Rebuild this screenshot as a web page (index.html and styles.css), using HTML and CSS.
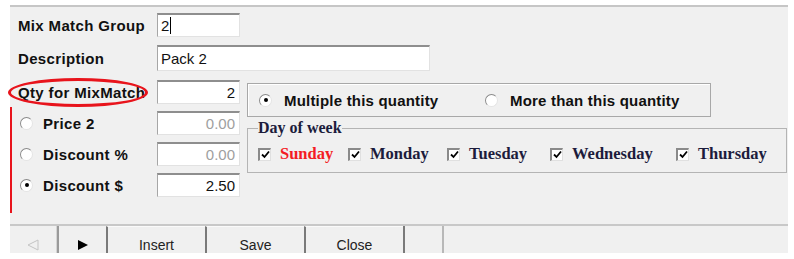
FILE: index.html
```html
<!DOCTYPE html>
<html>
<head>
  <meta charset="utf-8">
  <link rel="stylesheet" href="styles.css">
</head>
<body>
  <div class="window">
    <div class="form">
      <div class="row row-group">
        <span class="label">Mix Match Group</span>
        <div class="field field-short">2<span class="caret"></span></div>
      </div>
      <div class="row row-desc">
        <span class="label">Description</span>
        <div class="field field-long">Pack 2</div>
      </div>

      <div class="lower">
        <div class="left-col">
          <span class="red-line"></span>
          <div class="row row-qty">
            <span class="label">Qty for MixMatch</span>
            <span class="highlight"></span>
            <div class="field field-short num">2</div>
          </div>
          <div class="row">
            <span class="radio"></span>
            <span class="label label-radio">Price 2</span>
            <div class="field field-short num dim">0.00</div>
          </div>
          <div class="row">
            <span class="radio"></span>
            <span class="label label-radio">Discount %</span>
            <div class="field field-short num dim">0.00</div>
          </div>
          <div class="row">
            <span class="radio checked"></span>
            <span class="label label-radio">Discount $</span>
            <div class="field field-short num">2.50</div>
          </div>
        </div>

        <div class="right-col">
          <div class="group qty-mode">
            <div class="opt opt-multiple"><span class="radio checked"></span>Multiple this quantity</div>
            <div class="opt"><span class="radio"></span>More than this quantity</div>
          </div>
          <fieldset class="days">
            <legend>Day of week</legend>
            <div class="day-list">
              <div class="day day-sun"><span class="check"><svg viewBox="0 0 9 9" width="9" height="9"><path d="M1 4.5 L3.5 7 L8 1.5" fill="none" stroke="#000" stroke-width="1.8"/></svg></span><span class="sunday">Sunday</span></div>
              <div class="day day-mon"><span class="check"><svg viewBox="0 0 9 9" width="9" height="9"><path d="M1 4.5 L3.5 7 L8 1.5" fill="none" stroke="#000" stroke-width="1.8"/></svg></span>Monday</div>
              <div class="day day-tue"><span class="check"><svg viewBox="0 0 9 9" width="9" height="9"><path d="M1 4.5 L3.5 7 L8 1.5" fill="none" stroke="#000" stroke-width="1.8"/></svg></span>Tuesday</div>
              <div class="day day-wed"><span class="check"><svg viewBox="0 0 9 9" width="9" height="9"><path d="M1 4.5 L3.5 7 L8 1.5" fill="none" stroke="#000" stroke-width="1.8"/></svg></span>Wednesday</div>
              <div class="day"><span class="check"><svg viewBox="0 0 9 9" width="9" height="9"><path d="M1 4.5 L3.5 7 L8 1.5" fill="none" stroke="#000" stroke-width="1.8"/></svg></span>Thursday</div>
            </div>
          </fieldset>
        </div>
      </div>
    </div>

    <div class="toolbar">
      <div class="btn btn-prev"><svg viewBox="0 0 12 12" width="12" height="12"><polygon points="11,1 1,6 11,11" fill="none" stroke="#c4c4c4" stroke-width="1"/></svg></div>
      <div class="btn btn-next"><svg viewBox="0 0 10 10" width="10" height="10"><polygon points="0,0 10,5 0,10" fill="#000"/></svg></div>
      <div class="btn btn-wide">Insert</div>
      <div class="btn btn-wide">Save</div>
      <div class="btn btn-wide">Close</div>
      <div class="btn btn-blank"></div>
      <div class="btn btn-rest"></div>
    </div>
  </div>
</body>
</html>
```

FILE: styles.css
```css
body {
  margin: 0;
  background-color: #ffffff;
  font-family: 'Liberation Sans', Arial, sans-serif;
  color: #111;
  height: 259px;
  overflow: hidden;
}

.window {
  margin: 5px 0 0 10px;
  width: 778px;
  height: 248px;
  box-sizing: border-box;
  background-color: #f0f0f0;
  border-top: 2px solid #c6c6c6;
  display: flex;
  flex-direction: column;
}

.form {
  flex: 1;
  padding: 6px 0 0 8px;
}

.row {
  display: flex;
  align-items: center;
  height: 24px;
  position: relative;
}

.row-desc {
  margin-top: 8px;
  height: 26px;
}

.label {
  width: 139px;
  flex: none;
  font-size: 15px;
  font-weight: bold;
  letter-spacing: 0.35px;
  white-space: nowrap;
}

.label-radio {
  width: 114px;
}

.field {
  box-sizing: border-box;
  height: 100%;
  background-color: #fff;
  border: 1px solid #e2e2e2;
  border-top: 2px solid #8e8e8e;
  border-left: 1px solid #a6a6a6;
  font-size: 15px;
  padding: 0 3px;
  display: flex;
  align-items: center;
}

.field-short {
  width: 83px;
}

.field-long {
  width: 273px;
}

.num {
  justify-content: flex-end;
  padding-right: 4px;
}

.dim {
  color: #a0a0a0;
}

.caret {
  display: inline-block;
  width: 1px;
  height: 17px;
  background-color: #000;
  margin-left: 1px;
}

.lower {
  display: flex;
  margin: 8px 0 0 -8px;
}

.left-col {
  position: relative;
  width: 237px;
  box-sizing: border-box;
  padding: 1px 7px 0 8px;
  display: flex;
  flex-direction: column;
  gap: 7px;
}

.red-line {
  position: absolute;
  left: 0;
  top: 28px;
  width: 2px;
  height: 106px;
  background-color: #e8141c;
}

.highlight {
  position: absolute;
  left: -10px;
  top: -2px;
  width: 140px;
  height: 29px;
  box-sizing: border-box;
  border: 3px solid #e8141c;
  border-radius: 50%;
}

.radio {
  flex: none;
  width: 13px;
  height: 13px;
  box-sizing: border-box;
  border-radius: 50%;
  background-color: #fff;
  border: 1px solid #e4e4e4;
  border-top-color: #8a8a8a;
  border-left-color: #8a8a8a;
  margin: 0 10px 0 2px;
  display: flex;
  align-items: center;
  justify-content: center;
}

.radio.checked::after {
  content: "";
  width: 4px;
  height: 4px;
  border-radius: 50%;
  background-color: #000;
}

.right-col {
  width: 541px;
}

.group {
  margin-top: 4px;
  width: 464px;
  height: 34px;
  box-sizing: border-box;
  border: 1px solid #a8a8a8;
  box-shadow: inset 1px 1px 0 #fff;
  display: flex;
  align-items: center;
  padding-left: 11px;
}

.opt {
  display: flex;
  align-items: center;
  font-size: 15px;
  font-weight: bold;
  letter-spacing: 0.2px;
}

.opt .radio {
  margin: 0 12px 0 0;
}

.opt-multiple {
  width: 226px;
}

.days {
  margin: 2px 0 0 0;
  width: 540px;
  box-sizing: border-box;
  border: 1px solid #b4b4b4;
  padding: 0 0 0 10px;
  height: 54px;
}

.days legend {
  padding: 0;
  font-family: 'Liberation Serif', 'Times New Roman', serif;
  font-weight: bold;
  font-size: 16px;
  line-height: 18px;
  color: #1c1c3c;
}

.day-list {
  display: flex;
  align-items: center;
  height: 32px;
  padding-top: 1px;
}

.day {
  display: flex;
  align-items: center;
  font-family: 'Liberation Serif', 'Times New Roman', serif;
  font-weight: bold;
  font-size: 16.5px;
  color: #1c1c3c;
  white-space: nowrap;
}

.day-sun { width: 90px; }
.day-mon { width: 99px; }
.day-tue { width: 103px; }
.day-wed { width: 126px; }

.sunday {
  color: #f41c24;
}

.check {
  width: 13px;
  height: 13px;
  box-sizing: border-box;
  background-color: #fff;
  border: 1px solid #e0e0e0;
  border-top: 2px solid #8a8a8a;
  border-left: 2px solid #8a8a8a;
  margin-right: 9px;
  display: flex;
  align-items: center;
  justify-content: center;
}

.toolbar {
  height: 29px;
  box-sizing: border-box;
  border-top: 2px solid #c8c8c8;
  display: flex;
  overflow: hidden;
}

.btn {
  height: 100%;
  box-sizing: border-box;
  border-left: 2px solid #7a7a7a;
  display: flex;
  align-items: center;
  justify-content: center;
  padding-top: 10px;
  font-size: 14px;
  color: #222;
}

.btn-prev {
  width: 47px;
  border-left: none;
  border-right: 1px solid #d4d4d4;
}

.btn-next {
  width: 49px;
  border-left-color: #9a9a9a;
}

.btn-wide {
  width: 99px;
  border-top: 1px solid #fafafa;
}

.btn-blank {
  width: 39px;
}

.btn-rest {
  flex: 1;
  border-left-color: #b8b8b8;
}
```
